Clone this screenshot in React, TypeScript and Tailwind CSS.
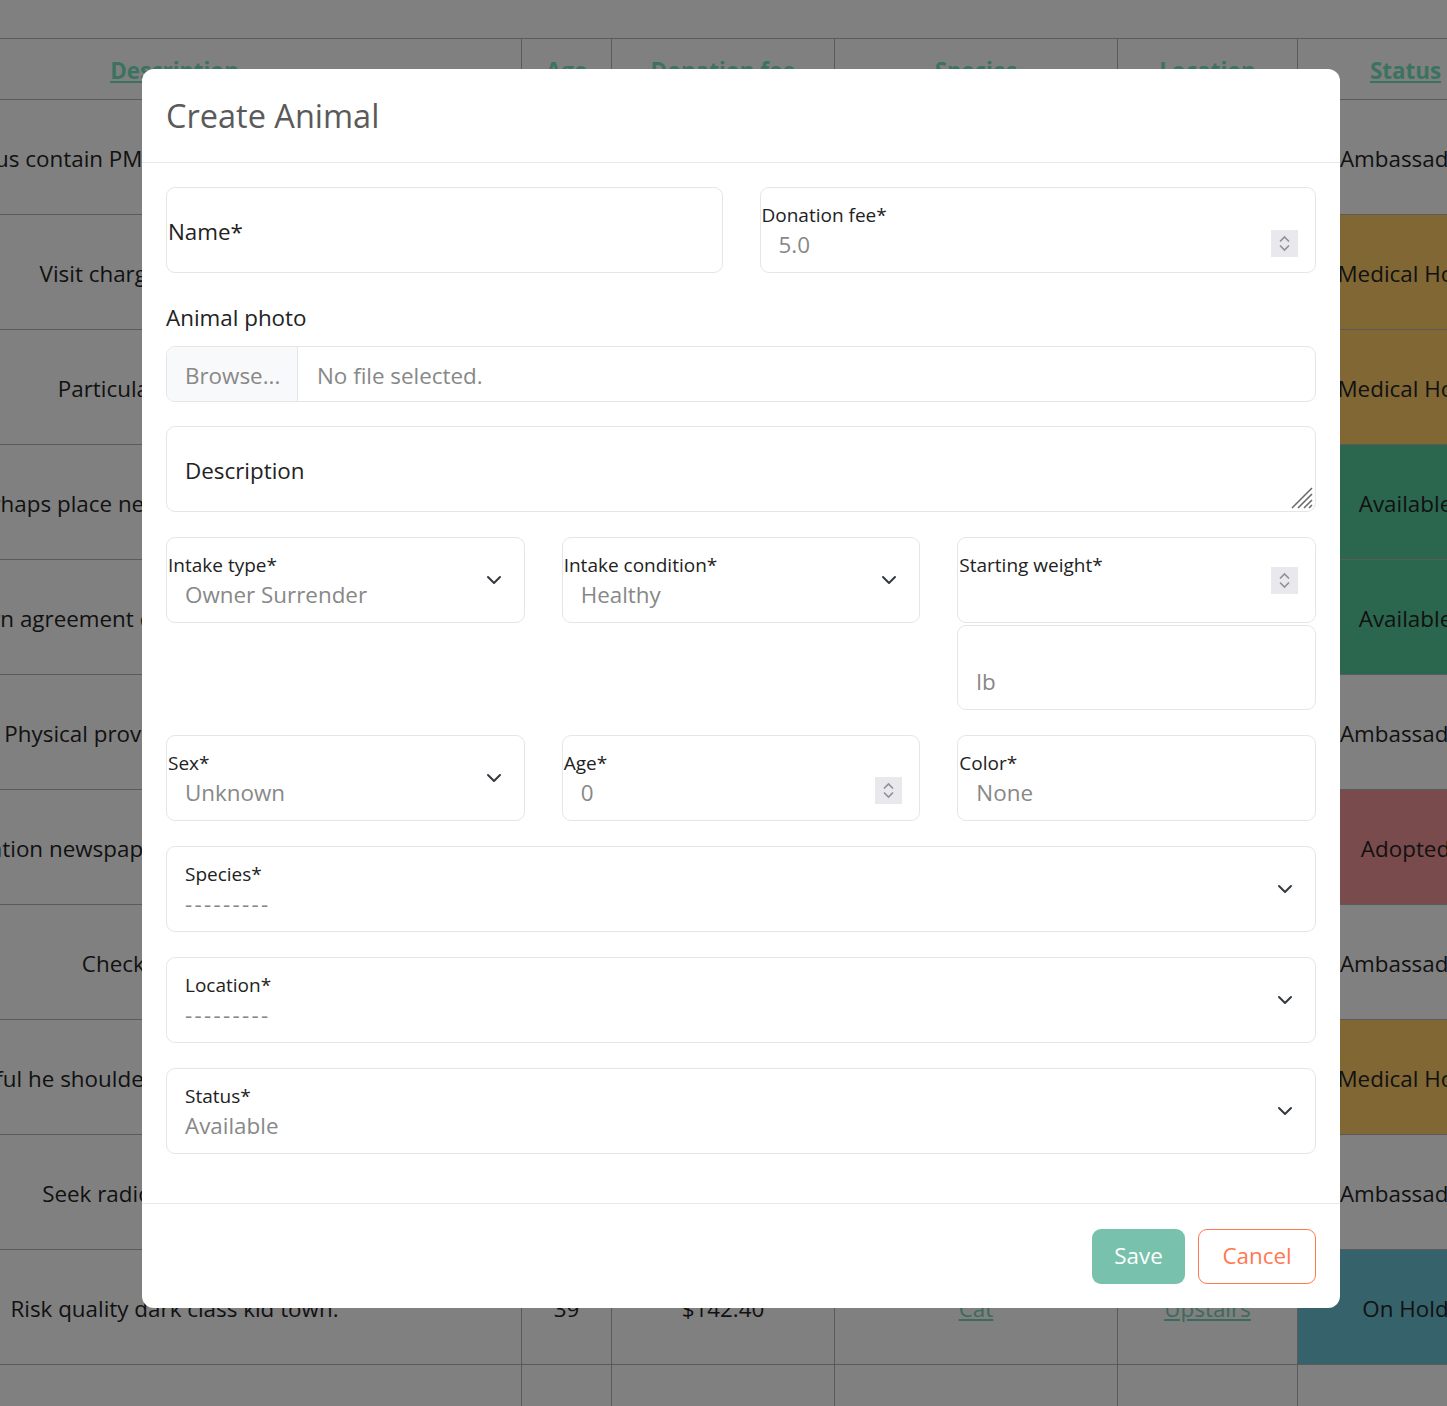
import React from "react";

type Row = { d: string; age: string; fee: string; sp: string; loc: string; st: string };

const rows: Row[] = [
  { d: "Various contain PM thing really order myself.", age: "4", fee: "$57.10", sp: "Dog", loc: "Kennel", st: "Ambassador" },
  { d: "Visit charge bring my arts.", age: "12", fee: "$88.00", sp: "Cat", loc: "Upstairs", st: "Medical Hold" },
  { d: "Particular final results.", age: "7", fee: "$23.50", sp: "Rabbit", loc: "Barn", st: "Medical Hold" },
  { d: "Perhaps place network soon me tax left.", age: "2", fee: "$110.25", sp: "Dog", loc: "Kennel", st: "Available" },
  { d: "Western agreement chance sit lot beautiful top.", age: "9", fee: "$64.00", sp: "Cat", loc: "Upstairs", st: "Available" },
  { d: "Physical provide whole dog sure.", age: "15", fee: "$12.80", sp: "Bird", loc: "Aviary", st: "Ambassador" },
  { d: "Education newspaper cultural whoever town.", age: "3", fee: "$95.40", sp: "Dog", loc: "Kennel", st: "Adopted" },
  { d: "Check bring clear.", age: "21", fee: "$30.00", sp: "Cat", loc: "Upstairs", st: "Ambassador" },
  { d: "Careful he shoulder himself entirely animal.", age: "6", fee: "$77.75", sp: "Rabbit", loc: "Barn", st: "Medical Hold" },
  { d: "Seek radio heavy per bar.", age: "11", fee: "$45.60", sp: "Dog", loc: "Kennel", st: "Ambassador" },
  { d: "Risk quality dark class kid town.", age: "39", fee: "$142.40", sp: "Cat", loc: "Upstairs", st: "On Hold" },
  { d: "Rate attention fill sure.", age: "8", fee: "$19.90", sp: "Dog", loc: "Kennel", st: "Ambassador" },
];

function statusBg(s: string) {
  if (s === "Medical Hold") return "bg-[#806734]";
  if (s === "Available") return "bg-[#2b664e]";
  if (s === "Adopted") return "bg-[#7a4b4d]";
  if (s === "On Hold") return "bg-[#36626b]";
  return "";
}

function Chevron() {
  return (
    <svg className="absolute right-[22px] top-1/2 -translate-y-1/2" width="16" height="16" viewBox="0 0 16 16" fill="none">
      <path d="M2 5l6 6 6-6" stroke="#343a40" strokeWidth="2" strokeLinecap="round" strokeLinejoin="round" />
    </svg>
  );
}

function Spinner({ top }: { top: string }) {
  return (
    <div className={`absolute right-[17px] h-[27px] w-[27px] bg-[#e9e9ed] ${top}`}>
      <svg width="27" height="27" viewBox="0 0 27 27" fill="none">
        <path d="M9 11.5l4.5-4.5 4.5 4.5" stroke="#8f8f9d" strokeWidth="1.6" />
        <path d="M9 15.5l4.5 4.5 4.5-4.5" stroke="#8f8f9d" strokeWidth="1.6" />
      </svg>
    </div>
  );
}

function Field({
  label,
  value,
  padLabel,
  select,
  spinTop,
  dashes,
}: {
  label: string;
  value?: string;
  padLabel?: boolean;
  select?: boolean;
  spinTop?: string;
  dashes?: boolean;
}) {
  return (
    <div className="relative flex h-[86px] flex-col rounded-[9px] border border-[#e6e6e6] bg-white pt-[14px]">
      <div className={`text-[19px] leading-[27px] text-[#222] ${padLabel ? "pl-[18px]" : "pl-[1px]"}`}>{label}</div>
      {value !== undefined && (
        <div className={`pl-[18px] text-[22.4px] leading-[32px] text-[#888] ${dashes ? "tracking-[2.3px]" : ""}`}>{value}</div>
      )}
      {select && <Chevron />}
      {spinTop && <Spinner top={spinTop} />}
    </div>
  );
}

export default function App() {
  return (
    <div className="relative h-[1406px] w-[1447px] overflow-hidden bg-[#808080] font-['Open_Sans',sans-serif]">
      <div className="pt-[38px]">
        <table className="-ml-[173px] w-[1686px] table-fixed border-collapse text-[22.4px] text-[#111]">
          <colgroup>
            <col className="w-[694px]" />
            <col className="w-[90px]" />
            <col className="w-[223px]" />
            <col className="w-[283px]" />
            <col className="w-[180px]" />
            <col className="w-[216px]" />
          </colgroup>
          <thead>
            <tr>
              {["Description", "Age", "Donation fee", "Species", "Location", "Status"].map((h) => (
                <th key={h} className="h-[61px] border border-[#5a5a5a] pt-[4px] text-center align-middle font-bold">
                  <span className="text-[#3b7360] underline">{h}</span>
                </th>
              ))}
            </tr>
          </thead>
          <tbody>
            {rows.map((r, i) => (
              <tr key={i}>
                <td className="h-[115px] whitespace-nowrap border border-[#5a5a5a] pt-[4px] text-center align-middle">{r.d}</td>
                <td className="border border-[#5a5a5a] pt-[4px] text-center align-middle">{r.age}</td>
                <td className="border border-[#5a5a5a] pt-[4px] text-center align-middle">{r.fee}</td>
                <td className="border border-[#5a5a5a] pt-[4px] text-center align-middle">
                  <span className="text-[#3c6a5d] underline">{r.sp}</span>
                </td>
                <td className="border border-[#5a5a5a] pt-[4px] text-center align-middle">
                  <span className="text-[#3c6a5d] underline">{r.loc}</span>
                </td>
                <td className={`border border-[#5a5a5a] pt-[4px] text-center align-middle ${statusBg(r.st)}`}>{r.st}</td>
              </tr>
            ))}
          </tbody>
        </table>
      </div>

      {/* Modal */}
      <div className="absolute left-[142px] top-[69px] flex h-[1239px] w-[1198px] flex-col rounded-[12px] bg-white">
        <div className="flex h-[94px] items-center border-b border-[#e9e9e9] px-[24px]">
          <h5 className="text-[32.5px] font-normal leading-[42px] text-[#5a5a5a]">Create Animal</h5>
        </div>

        <div className="flex-1 px-[24px] pt-[24px]">
          <div className="grid grid-cols-2 gap-x-[37px]">
            <div className="flex h-[86px] items-center rounded-[9px] border border-[#e6e6e6] pl-[1px] pt-[3px] text-[22.4px] text-[#222]">
              Name*
            </div>
            <Field label="Donation fee*" value="5.0" spinTop="top-[42px]" />
          </div>

          <div className="mt-[28px] mb-[11px] text-[22.4px] leading-[34px] text-[#222]">Animal photo</div>
          <div className="flex h-[56px] overflow-hidden rounded-[9px] border border-[#e6e6e6] text-[22.4px] text-[#888]">
            <div className="flex w-[131px] items-center border-r border-[#e6e6e6] bg-[#f8f9fa] pl-[18px] pt-[3px]">Browse...</div>
            <div className="flex items-center pl-[19px] pt-[3px]">No file selected.</div>
          </div>

          <div className="relative mt-[24px] h-[86px] rounded-[9px] border border-[#e6e6e6] pl-[18px] pt-[27px] text-[22.4px] leading-[34px] text-[#222]">
            Description
            <svg className="absolute bottom-[1px] right-[1px]" width="24" height="24" viewBox="0 0 24 24" fill="none">
              <path d="M22 2L2 22M22 8L8 22M22 14L14 22M22 19L19 22" stroke="#6b6b6b" strokeWidth="1.6" />
            </svg>
          </div>

          <div className="mt-[25px] grid grid-cols-3 items-start gap-x-[37px]">
            <Field label="Intake type*" value="Owner Surrender" select />
            <Field label="Intake condition*" value="Healthy" select />
            <div className="flex flex-col gap-[2px]">
              <Field label="Starting weight*" spinTop="top-[29px]" />
              <div className="flex h-[85px] items-end rounded-[9px] border border-[#e6e6e6] pb-[10px] pl-[18px] text-[22.4px] leading-[34px] text-[#888]">
                lb
              </div>
            </div>
          </div>

          <div className="mt-[25px] grid grid-cols-3 gap-x-[37px]">
            <Field label="Sex*" value="Unknown" select />
            <Field label="Age*" value="0" spinTop="top-[41px]" />
            <Field label="Color*" value="None" />
          </div>

          <div className="mt-[25px]">
            <Field label="Species*" value="---------" padLabel select dashes />
          </div>
          <div className="mt-[25px]">
            <Field label="Location*" value="---------" padLabel select dashes />
          </div>
          <div className="mt-[25px]">
            <Field label="Status*" value="Available" padLabel select />
          </div>
        </div>

        <div className="flex h-[105px] items-center justify-end gap-[13px] border-t border-[#e9e9e9] px-[24px]">
          <button className="h-[55px] w-[93px] rounded-[9px] bg-[#78c2ad] text-[22.4px] text-white">Save</button>
          <button className="h-[55px] w-[118px] rounded-[9px] border border-[#ff7851] bg-white text-[22.4px] text-[#ff7851]">
            Cancel
          </button>
        </div>
      </div>
    </div>
  );
}
